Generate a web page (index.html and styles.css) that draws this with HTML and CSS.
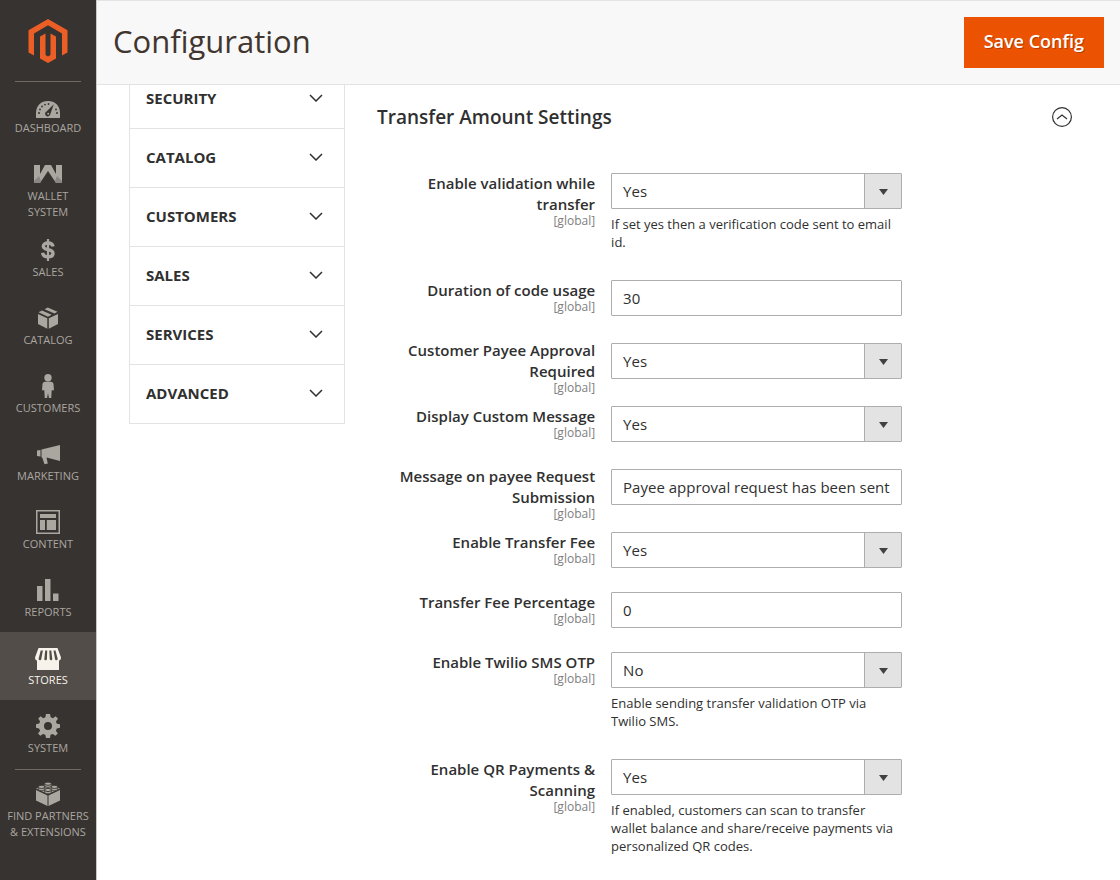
FILE: index.html
```
<!DOCTYPE html>
<html lang="en">
<head>
  <meta charset="UTF-8">
  <meta name="viewport" content="width=device-width, initial-scale=1.0">
  <title>Configuration</title>
  <link rel="stylesheet" href="styles.css">
</head>
<body>
  <aside class="sidebar">
    <a class="logo" href="#" aria-label="Home">
      <svg width="40" height="46" viewBox="0 0 40 46" fill="#eb5f26">
        <path d="M20 1 39.500 12.200V34.500L34 37.600V15.400L20 7.300 6 15.400V37.600L.5 34.500V12.200z"/>
        <path d="M12 18.500 17.500 15.400V37L20 38.600 22.500 37V15.400L28 18.500V40.400L20 45 12 40.400z"/>
      </svg>
    </a>
    <nav class="menu">
      <a class="menu-item divided" href="#">
        <svg width="24" height="24" viewBox="0 0 24 24" fill="currentColor"><path d="M0 24V19C0 11.500 5.200 7 12 7s12 4.500 12 12v5z"/><g fill="#373330"><circle cx="3" cy="19" r="1"/><circle cx="4" cy="15.500" r=".9"/><circle cx="6" cy="12.500" r=".9"/><circle cx="9" cy="10.600" r=".9"/><circle cx="12.500" cy="10" r=".9"/><circle cx="20" cy="15.500" r=".9"/><circle cx="21" cy="19" r="1"/><path d="m17.800 10.200-7.300 7.300a2.600 2.600 0 1 0 3.700 3z"/></g><circle cx="12.200" cy="19.700" r="1" /></svg>
        <span>Dashboard</span>
      </a>
      <a class="menu-item" href="#">
        <svg width="28" height="24" viewBox="0 0 28 24" fill="currentColor"><path d="M0 3h6v9l5-9h6l5 9V3h6v18h-6L14 9 6 21H0z"/><path d="M0 21v-2l5-5 2 5-1 2zM28 21v-2l-5-5-2 5 1 2z" fill="#8a8681"/></svg>
        <span>Wallet<br>System</span>
      </a>
      <a class="menu-item" href="#">
        <svg width="14" height="24" viewBox="0 0 14 24" fill="none" stroke="currentColor"><path d="M12 8.500C11.600 6 9.800 5 7 5 4.300 5 2.300 6.200 2.300 8.300 2.300 13 12 10.300 12 15.300c0 2.300-2.100 3.500-5 3.500-3.200 0-5-1.300-5.400-4" stroke-width="3.400"/><path d="M7 1v22" stroke-width="2.200"/></svg>
        <span>Sales</span>
      </a>
      <a class="menu-item" href="#">
        <svg width="22" height="24" viewBox="0 0 22 24" fill="currentColor"><path d="m7.500 3.200 3.200-1.700 9.800 4.300-3 1.700zM1.500 6.200l3.500-1.800 9.700 4.400-3.700 1.900zM1 8l9.300 4.200v10.600L1 18zM11.800 12.200 21 8v10l-9.200 4.800z"/></svg>
        <span>Catalog</span>
      </a>
      <a class="menu-item" href="#">
        <svg width="14" height="26" viewBox="0 0 14 26" fill="currentColor"><circle cx="7" cy="4" r="4"/><path d="M4 8.500h6c2 0 2.700 1 3 3l.5 6H11L10.500 26H8L7 20.500 6 26H3.500L3 17.500H.5l.5-6c.3-2 1-3 3-3z"/></svg>
        <span>Customers</span>
      </a>
      <a class="menu-item" href="#">
        <svg width="24" height="24" viewBox="0 0 24 24" fill="currentColor"><path d="M1 8.500 4.500 8v6.500L1 14zM5.500 7.600 24 3v16L10.500 15.600l1.300 5.800-3.300.9-2.300-6.900h-.7z"/></svg>
        <span>Marketing</span>
      </a>
      <a class="menu-item" href="#">
        <svg width="24" height="24" viewBox="0 0 24 24" fill="currentColor"><path d="M0 0h24v24H0zm1.500 1.500v21h21v-21z" fill-rule="evenodd"/><path d="M4 4h16v4H4zM4 10h5v10H4zM10.800 10H20v10h-9.200z"/></svg>
        <span>Content</span>
      </a>
      <a class="menu-item" href="#">
        <svg width="24" height="24" viewBox="0 0 24 24" fill="currentColor"><path d="M1 8h5.500v15H1zM9 1h5.500v22H9zM17 15.500h5.500V23H17z"/></svg>
        <span>Reports</span>
      </a>
      <a class="menu-item active" href="#">
        <svg width="26" height="24" viewBox="0 0 26 24" fill="currentColor"><path d="M3.500 2h19L26 11.500c0 2-1 3-2 3V24H2v-9.500c-1 0-2-1-2-3z"/><path d="M5.700 4.500h2.200L6.300 13a1.300 1.300 0 0 1-2.700-.3zM10.200 4.500h2l-.3 8.500a1.300 1.300 0 0 1-2.600 0zM14.300 4.500h2l1 8.500a1.300 1.300 0 0 1-2.600 0zM18.500 4.500h2l2.200 8.300a1.300 1.300 0 0 1-2.700.3z" fill="#524d49"/></svg>
        <span>Stores</span>
      </a>
      <a class="menu-item" href="#">
        <svg width="24" height="24" viewBox="0 0 24 24" fill="currentColor" fill-rule="evenodd"><path d="m10 0h4l.7 3.300 2.200.9L19.700 2.300 22 4.700l-2.100 2.700 1 2.300L24 10.200v3.600l-3.200.6-.9 2.300 1.900 2.800-2.400 2.300-2.700-1.900-2.200.9L14 24h-4l-.7-3.200-2.200-.9-2.800 1.900L2 19.400l2.100-2.700-1-2.300L0 13.800v-3.600l3.200-.6.9-2.200-1.900-2.800 2.400-2.300 2.600 1.900 2.200-.9zM12 8a4 4 0 1 0 0 8 4 4 0 0 0 0-8z"/></svg>
        <span>System</span>
      </a>
      <a class="menu-item divided" href="#">
        <svg width="24" height="24" viewBox="0 0 24 24" fill="currentColor"><path d="m12 1 12 5.500L12 12 0 6.500zM0 8l11.500 5.400V24L0 18.500zM12.500 13.400 24 8v10.500L12.500 24z"/><g stroke="#373330" stroke-width=".9"><path d="M8.700 1.500v2.300c0 2 6.600 2 6.600 0V1.500M2.200 4.800v2.300c0 2 6.600 2 6.600 0V4.800M15.200 4.800v2.300c0 2 6.600 2 6.600 0V4.800M8.700 8v2.300c0 2 6.600 2 6.600 0V8"/><ellipse cx="12" cy="1.700" rx="3.300" ry="1.600"/><ellipse cx="5.500" cy="4.900" rx="3.300" ry="1.600"/><ellipse cx="18.500" cy="4.900" rx="3.300" ry="1.600"/><ellipse cx="12" cy="8" rx="3.300" ry="1.600"/></g></svg>
        <span>Find Partners &amp; Extensions</span>
      </a>
    </nav>
  </aside>

  <div class="page">
    <header class="page-header">
      <h1>Configuration</h1>
      <button type="button" class="save">Save Config</button>
    </header>

    <main class="columns">
      <nav class="tabs">
        <button type="button" class="tab">Security <svg width="14" height="8" viewBox="0 0 14 8"><path d="m1 1 6 6 6-6"/></svg></button>
        <button type="button" class="tab">Catalog <svg width="14" height="8" viewBox="0 0 14 8"><path d="m1 1 6 6 6-6"/></svg></button>
        <button type="button" class="tab">Customers <svg width="14" height="8" viewBox="0 0 14 8"><path d="m1 1 6 6 6-6"/></svg></button>
        <button type="button" class="tab">Sales <svg width="14" height="8" viewBox="0 0 14 8"><path d="m1 1 6 6 6-6"/></svg></button>
        <button type="button" class="tab">Services <svg width="14" height="8" viewBox="0 0 14 8"><path d="m1 1 6 6 6-6"/></svg></button>
        <button type="button" class="tab">Advanced <svg width="14" height="8" viewBox="0 0 14 8"><path d="m1 1 6 6 6-6"/></svg></button>
      </nav>

      <form class="section">
        <div class="section-head">
          <h2>Transfer Amount Settings</h2>
          <button type="button" class="collapse" aria-label="Collapse">
            <svg width="20" height="20" viewBox="0 0 20 20"><circle cx="10" cy="10" r="9.400"/><path d="m5 12 5-4 5 4"/></svg>
          </button>
        </div>

        <div class="row">
          <label for="validation">Enable validation while transfer <span class="scope">[global]</span></label>
          <div class="value">
            <select id="validation"><option>Yes</option><option>No</option></select>
            <p class="note">If set yes then a verification code sent to email id.</p>
          </div>
        </div>
        <div class="row">
          <label for="duration">Duration of code usage <span class="scope">[global]</span></label>
          <div class="value"><input type="text" id="duration" value="30"></div>
        </div>
        <div class="row">
          <label for="approval">Customer Payee Approval Required <span class="scope">[global]</span></label>
          <div class="value"><select id="approval"><option>Yes</option><option>No</option></select></div>
        </div>
        <div class="row">
          <label for="custom">Display Custom Message <span class="scope">[global]</span></label>
          <div class="value"><select id="custom"><option>Yes</option><option>No</option></select></div>
        </div>
        <div class="row">
          <label for="message">Message on payee Request Submission <span class="scope">[global]</span></label>
          <div class="value"><input type="text" id="message" value="Payee approval request has been sent"></div>
        </div>
        <div class="row">
          <label for="fee">Enable Transfer Fee <span class="scope">[global]</span></label>
          <div class="value"><select id="fee"><option>Yes</option><option>No</option></select></div>
        </div>
        <div class="row">
          <label for="percentage">Transfer Fee Percentage <span class="scope">[global]</span></label>
          <div class="value"><input type="text" id="percentage" value="0"></div>
        </div>
        <div class="row">
          <label for="twilio">Enable Twilio SMS OTP <span class="scope">[global]</span></label>
          <div class="value">
            <select id="twilio"><option>No</option><option>Yes</option></select>
            <p class="note">Enable sending transfer validation OTP via Twilio SMS.</p>
          </div>
        </div>
        <div class="row">
          <label for="qr">Enable QR Payments &amp; Scanning <span class="scope">[global]</span></label>
          <div class="value">
            <select id="qr"><option>Yes</option><option>No</option></select>
            <p class="note">If enabled, customers can scan to transfer wallet balance and share/receive payments via personalized QR codes.</p>
          </div>
        </div>
      </form>
    </main>
  </div>
</body>
</html>
```
FILE: styles.css
```
* {
  margin: 0;
  padding: 0;
  box-sizing: border-box;
}

body {
  display: flex;
  min-height: 100vh;
  font-family: "Open Sans", sans-serif;
  font-size: 15px;
  color: #303030;
  background: #fff;
}

button,
input,
select {
  font-family: inherit;
  color: inherit;
}

/* Left admin menu */
.sidebar {
  flex: 0 0 96px;
  background: #373330;
}

.logo {
  display: flex;
  align-items: center;
  justify-content: center;
  height: 80px;
  padding-top: 2px;
}

.menu-item {
  position: relative;
  display: flex;
  flex-direction: column;
  align-items: center;
  gap: 2px;
  min-height: 68px;
  padding: 14px 4px 4px;
  font-size: 11px;
  line-height: 16px;
  text-align: center;
  text-transform: uppercase;
  text-decoration: none;
  color: #aaa6a0;
}

.menu-item svg {
  height: 24px;
}

.menu-item.active {
  color: #f7f3eb;
  background: #524d49;
}

.menu-item.divided::before {
  content: "";
  position: absolute;
  top: 1px;
  left: 15px;
  right: 15px;
  border-top: 1px solid #736963;
}

/* Header */
.page {
  flex: 1;
  min-width: 0;
  border-left: 1px solid #ccc8c4;
}

.page-header {
  position: sticky;
  top: 0;
  z-index: 2;
  display: flex;
  align-items: center;
  justify-content: space-between;
  padding: 16px;
  background: #f8f8f8;
  border-top: 1px solid #e3e3e3;
  border-bottom: 1px solid #e3e3e3;
}

h1 {
  padding-bottom: 4px;
  font-size: 31px;
  font-weight: 400;
  line-height: 44px;
  color: #41362f;
}

.save {
  padding: 0 19px 2px;
  border: 1px solid #eb5202;
  background: #eb5202;
  color: #fff;
  font-size: 18px;
  font-weight: 600;
  line-height: 47px;
  text-shadow: 1px 1px 0 rgba(0, 0, 0, 0.25);
  cursor: pointer;
}

.columns {
  display: flex;
  align-items: flex-start;
  gap: 32px;
  padding: 0 16px 0 32px;
}

/* Config tabs, scrolled partly under the header */
.tabs {
  flex: 0 0 216px;
  margin-top: -16px;
  border: 1px solid #e3e3e3;
  border-top: none;
}

.tab {
  display: flex;
  align-items: center;
  justify-content: space-between;
  width: 100%;
  height: 59px;
  padding: 0 21px 3px 16px;
  border: none;
  border-top: 1px solid #e3e3e3;
  background: #fff;
  font-size: 15px;
  font-weight: 700;
  text-transform: uppercase;
  cursor: pointer;
}

.tab svg,
.collapse svg {
  display: block;
  fill: none;
  stroke: #303030;
  stroke-width: 1.5;
}

.collapse svg {
  stroke-width: 1.2;
}

/* Settings */
.section {
  flex: 1;
  min-width: 0;
}

.section-head {
  display: flex;
  align-items: center;
  justify-content: space-between;
  padding: 18px 32px 42px 0;
}

h2 {
  font-size: 19px;
  font-weight: 600;
  line-height: 28px;
}

.collapse {
  border: none;
  background: none;
  cursor: pointer;
}

.row {
  display: grid;
  grid-template-columns: 30% 40%;
  column-gap: 16px;
  align-items: center;
  padding-bottom: 12px;
}

.row:last-child {
  padding-bottom: 0;
}

.row label {
  align-self: start;
  font-size: 15px;
  font-weight: 600;
  line-height: 21px;
  text-align: right;
}

.scope {
  display: block;
  font-size: 12px;
  font-weight: 400;
  line-height: 12px;
  color: #808080;
}

.value {
  padding-bottom: 12px;
}

.value input,
.value select {
  display: block;
  width: 100%;
  height: 36px;
  padding: 0 11px;
  border: 1px solid #adadad;
  border-radius: 1px;
  background: #fff;
  font-size: 15px;
}

.value select {
  appearance: none;
  padding-right: 48px;
  background: #fff url("data:image/svg+xml,%3Csvg xmlns='http://www.w3.org/2000/svg' width='38' height='34'%3E%3Cpath fill='%23e3e3e3' d='M1 0h37v34H1z'/%3E%3Cpath fill='%23adadad' d='M1 0h1v34H1z'/%3E%3Cpath fill='%23414141' d='M16 15h9l-4.500 6z'/%3E%3C/svg%3E") no-repeat right center;
}

.note {
  margin: 6px 0 5px;
  font-size: 13px;
  line-height: 18px;
}
```
